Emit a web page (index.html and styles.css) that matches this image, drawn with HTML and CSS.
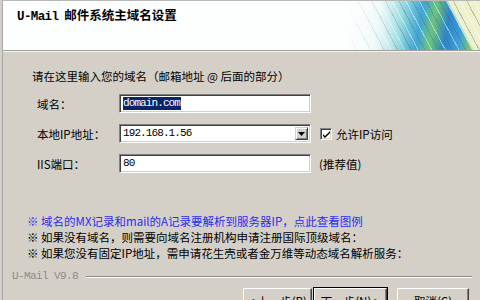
FILE: index.html
```html
<!DOCTYPE html>
<html lang="zh-CN">
<head>
  <meta charset="UTF-8">
  <title>U-Mail 邮件系统主域名设置</title>
  <link rel="stylesheet" href="styles.css">
</head>
<body>

  <div class="dialog">
    <div class="banner">
      <div class="banner-title"><span class="latin">U-Mail</span> 邮件系统主域名设置</div>
      <div class="banner-art"></div>
    </div>

    <div class="content">
      <p class="intro">请在这里输入您的域名（邮箱地址 @ 后面的部分）</p>

      <div class="form">
        <span class="label">域名：</span>
        <div class="field"><span class="value selected">domain.com</span></div>
        <span></span>

        <span class="label">本地IP地址：</span>
        <div class="field combo">
          <span class="value">192.168.1.56</span>
          <span class="drop">
            <svg width="7" height="4" viewBox="0 0 7 4"><path d="M0 0h7L3.5 4z" fill="#000"/></svg>
          </span>
        </div>
        <span class="check">
          <span class="box">
            <svg width="9" height="9" viewBox="0 0 9 9"><path d="M1 4l2 2 5-5v2L3 8 1 6z" fill="#000"/></svg>
          </span>
          允许IP访问
        </span>

        <span class="label">IIS端口：</span>
        <div class="field"><span class="value">80</span></div>
        <span class="hint">(推荐值)</span>
      </div>

      <div class="notes">
        <p class="note link">※ 域名的MX记录和mail的A记录要解析到服务器IP，点此查看图例</p>
        <p class="note">※ 如果没有域名，则需要向域名注册机构申请注册国际顶级域名：</p>
        <p class="note">※ 如果您没有固定IP地址，需申请花生壳或者金万维等动态域名解析服务：</p>
      </div>
    </div>

    <div class="footer">
      <div class="brand-line">
        <span class="version">U-Mail V9.8</span>
        <span class="rule"></span>
      </div>
      <div class="buttons">
        <button class="btn btn-back">&lt; 上一步(<u>P</u>)</button>
        <button class="btn btn-next">下一步(<u>N</u>) &gt;</button>
        <button class="btn btn-cancel">取消(<u>C</u>)</button>
      </div>
    </div>
  </div>

</body>
</html>
```

FILE: styles.css
```css
html, body {
  margin: 0;
  padding: 0;
  background: #d4d0c8;
}
body {
  font-family: "Noto Sans CJK SC", sans-serif;
  font-size: 11.5px;
  color: #000;
  overflow: hidden;
}
p {
  margin: 0;
}
.dialog {
  width: 478px;
  height: 299px;
  margin-left: 2px;
  border-left: 1px solid #a8a8a8;
  border-top: 1px solid #b8b8b8;
  overflow: hidden;
}

/* header */
.banner {
  height: 49px;
  display: flex;
  background: #fdfefe;
  border-bottom: 1px solid #a0a0a0;
  box-shadow: 0 1px 0 #f4f4f4;
}
.banner-title {
  padding: 6px 0 0 14px;
  line-height: 16px;
  font-size: 12.5px;
  font-weight: bold;
  flex: 1;
}
.banner-title .latin {
  font-family: "Liberation Mono", monospace;
  letter-spacing: -0.6px;
  margin-right: 3px;
}
.banner-art {
  width: 137px;
  height: 49px;
  background:
    repeating-linear-gradient(62deg, rgba(255,255,255,0) 0 5px, rgba(255,255,255,.45) 5px 6px, rgba(255,255,255,0) 6px 11px, rgba(90,90,110,.35) 11px 12px),
    linear-gradient(62deg, rgba(255,255,255,0) 0 78%, #eef2cc 80% 100%),
    linear-gradient(100deg, #ffffff 0%, #dff6f4 25%, #8fd8df 42%, #3fa6d6 55%, #6cc47a 64%, #2b86c9 74%, #3d9fd8 84%, #7cc66e 92%);
  -webkit-mask-image: linear-gradient(to right, transparent 0, rgba(0,0,0,.5) 25%, #000 45%);
  mask-image: linear-gradient(to right, transparent 0, rgba(0,0,0,.5) 25%, #000 45%);
}

/* body */
.content {
  padding-top: 17px;
}
.intro {
  padding-left: 29px;
  line-height: 16px;
}
.form {
  display: grid;
  grid-template-columns: 74px 192px auto;
  grid-auto-rows: 19px;
  column-gap: 8px;
  row-gap: 11px;
  margin: 10px 0 0 34px;
  align-items: center;
}
.label {
  line-height: 16px;
}
.field {
  height: 19px;
  box-sizing: border-box;
  background: #fff;
  border-top: 1px solid #808080;
  border-left: 1px solid #808080;
  border-right: 1px solid #fff;
  border-bottom: 1px solid #fff;
  box-shadow: inset 1px 1px 0 #404040, inset -1px -1px 0 #d4d0c8;
  display: flex;
  align-items: center;
  padding-left: 3px;
}
.value {
  font-family: "Liberation Mono", monospace;
  font-size: 11px;
  letter-spacing: -0.9px;
  line-height: 13px;
}
.selected {
  background: #0a246a;
  color: #fff;
  padding-right: 1px;
}
.combo {
  justify-content: space-between;
  padding-right: 2px;
}
.drop {
  width: 13px;
  height: 13px;
  box-sizing: border-box;
  background: #d4d0c8;
  border-top: 1px solid #d4d0c8;
  border-left: 1px solid #d4d0c8;
  border-right: 1px solid #404040;
  border-bottom: 1px solid #404040;
  box-shadow: inset 1px 1px 0 #fff, inset -1px -1px 0 #808080;
  display: flex;
  align-items: center;
  justify-content: center;
}
.check {
  display: flex;
  align-items: center;
  gap: 4px;
  margin-left: 1px;
}
.box {
  width: 12px;
  height: 12px;
  box-sizing: border-box;
  background: #fff;
  border-top: 1px solid #808080;
  border-left: 1px solid #808080;
  border-right: 1px solid #fff;
  border-bottom: 1px solid #fff;
  box-shadow: inset 1px 1px 0 #404040, inset -1px -1px 0 #d4d0c8;
  display: flex;
  align-items: center;
  justify-content: center;
}
.box svg {
  margin-top: 1px;
}

/* notes */
.notes {
  margin-top: 40px;
  padding-left: 24px;
}
.note {
  line-height: 16px;
  white-space: nowrap;
}
.note.link {
  color: #2b2bf5;
}

/* footer */
.footer {
  margin-top: 7px;
}
.brand-line {
  display: flex;
  align-items: center;
  padding: 0 9px 0 9px;
  line-height: 16px;
}
.version {
  font-family: "Liberation Mono", monospace;
  font-size: 11px;
  letter-spacing: -0.6px;
  color: #8c8c8c;
}
.rule {
  flex: 1;
  margin-left: 8px;
  height: 0;
  border-top: 1px solid #8c8c8c;
  border-bottom: 1px solid #fff;
  margin-top: 2px;
}
.buttons {
  display: flex;
  justify-content: flex-end;
  padding-right: 12px;
  margin-top: 4px;
}
.btn {
  height: 23px;
  box-sizing: border-box;
  font-family: "Noto Sans CJK SC", sans-serif;
  font-size: 11.5px;
  line-height: 14px;
  color: #000;
  background: #d4d0c8;
  border-top: 1px solid #fff;
  border-left: 1px solid #fff;
  border-right: 1px solid #404040;
  border-bottom: 1px solid #404040;
  box-shadow: inset -1px -1px 0 #808080;
  padding: 2px 0 0;
}
.btn-back {
  width: 69px;
}
.btn-next {
  width: 73px;
  margin-left: 2px;
  outline: 1px solid #000;
}
.btn-cancel {
  width: 72px;
  margin-left: 10px;
}
```
